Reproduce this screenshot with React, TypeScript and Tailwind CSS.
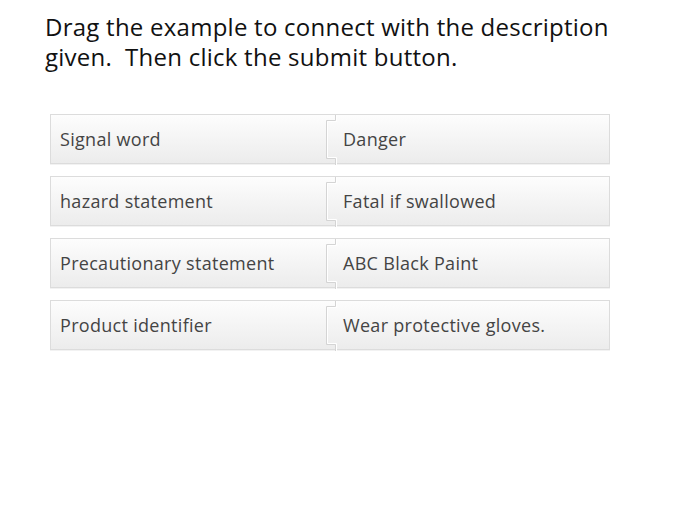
const pairs: [string, string][] = [
  ['Signal word', 'Danger'],
  ['hazard statement', 'Fatal if swallowed'],
  ['Precautionary statement', 'ABC Black Paint'],
  ['Product identifier', 'Wear protective gloves.'],
];

// bracket-shaped seam where the right piece snaps into the left one
function Seam() {
  return (
    <svg width="12" height="50" viewBox="0 0 12 50" className="shrink-0 -mx-[6px]">
      <path d="M10.5 0 V5.5 H1.5 V43.5 H10.5 V50" fill="none" stroke="#d4d4d4" strokeWidth="1" />
      <path d="M11.5 0 V6.5 H2.5 V42.5 H11.5 V50" fill="none" stroke="#ffffff" strokeWidth="1" />
    </svg>
  );
}

function Row({ left, right }: { left: string; right: string }) {
  return (
    <div className="flex h-[50px] w-[560px] items-stretch border border-[#dcdcdc] bg-gradient-to-b from-[#fdfdfd] to-[#ececec] shadow-[0_1px_0_#f2f2f2]">
      <div className="flex w-[280px] items-center pl-[9px] text-[18px] tracking-[0.3px] text-[#444]">{left}</div>
      <Seam />
      <div className="flex flex-1 items-center pl-[12px] text-[18px] tracking-[0.3px] text-[#444]">{right}</div>
    </div>
  );
}

export default function App() {
  return (
    <div
      className="h-[509px] w-[700px] bg-white pl-[45px] pt-[12px]"
      style={{ fontFamily: '"Open Sans", "Noto Sans", sans-serif' }}
    >
      <p className="text-[24px] leading-[30px] text-[#111] tracking-[0.25px]">
        Drag the example to connect with the description
        <br />
        given.&nbsp; Then click the submit button.
      </p>
      <div className="ml-[5px] mt-[42px] flex flex-col gap-[12px]">
        {pairs.map(([l, r]) => (
          <Row key={l} left={l} right={r} />
        ))}
      </div>
    </div>
  );
}
